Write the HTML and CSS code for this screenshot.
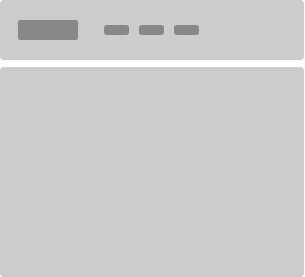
FILE: index.html
```html
<!DOCTYPE html>
<html lang="en">
<head>
    <meta charset="UTF-8">
    <meta name="viewport" content="width=device-width, initial-scale=1.0">
    <title>Page skeleton</title>
    <link rel="stylesheet" href="styles.css">
</head>
<body>
    <div class="page">
        <header class="topbar">
            <div class="logo"></div>
            <nav class="nav">
                <span class="nav-item"></span>
                <span class="nav-item"></span>
                <span class="nav-item"></span>
            </nav>
        </header>
        <main class="content"></main>
    </div>
</body>
</html>
```

FILE: styles.css
```css
body {
    margin: 0;
    background: #fff;
    font-family: 'Liberation Sans', sans-serif;
}

.page {
    display: flex;
    flex-direction: column;
    gap: 7px;
    width: 304px;
    height: 277px;
}

.topbar {
    display: flex;
    align-items: center;
    height: 60px;
    padding: 0 18px;
    background: #cccccc;
    border-radius: 4px;
}

.logo {
    width: 60px;
    height: 20px;
    background: #888888;
    border-radius: 2px;
}

.nav {
    display: flex;
    gap: 10px;
    margin-left: 26px;
}

.nav-item {
    width: 25px;
    height: 10px;
    background: #888888;
    border-radius: 3px;
}

.content {
    flex: 1;
    background: #cccccc;
    border-radius: 4px;
}
```
